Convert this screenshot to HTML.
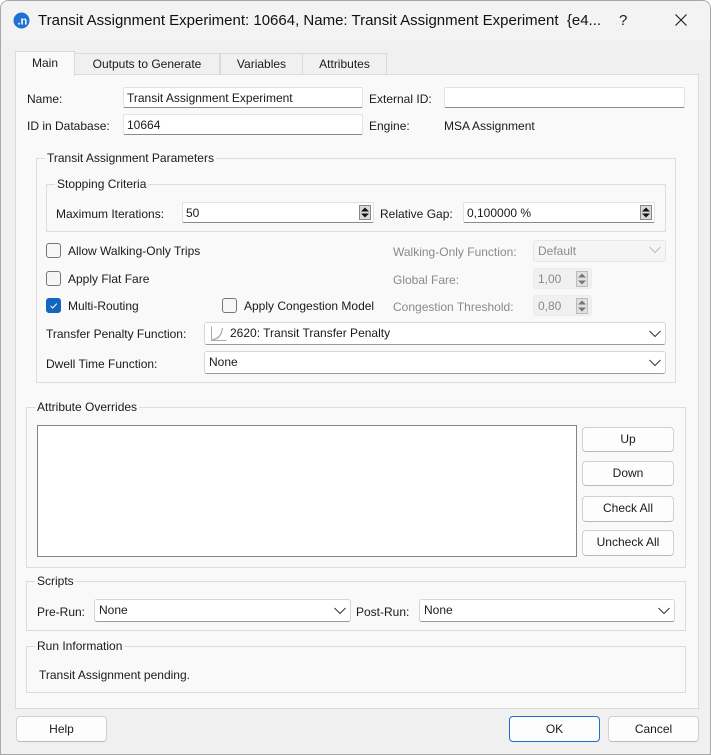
<!DOCTYPE html>
<html><head><meta charset="utf-8"><style>
*{box-sizing:border-box;margin:0;padding:0}
body{width:711px;height:755px;background:#fff;font-family:"Liberation Sans",sans-serif;font-size:12px;color:#1a1a1a;position:relative;overflow:hidden}
.win{position:absolute;left:0;top:0;width:711px;height:755px;background:#f0f0f0;border-radius:8px 8px 0 0;overflow:hidden}
.frame{position:absolute;left:0;top:0;width:711px;height:755px;border:1px solid #a8a8a8;border-radius:8px 8px 0 0}
.a{position:absolute;white-space:nowrap}
.t{position:absolute;white-space:nowrap;line-height:14px}
.in{position:absolute;background:#fff;border:1px solid #e2e2e2;border-bottom:1px solid #8a8a8a;border-radius:2px;padding-left:3px;line-height:20px}
.grp{position:absolute;border:1px solid #dcdcdc}
.gt{position:absolute;background:#f9f9f9;padding:0 2px;line-height:14px;top:-8px}
.cb{position:absolute;width:15px;height:15px;border:1px solid #777;border-radius:3px;background:#f6f6f6}
.btn{position:absolute;background:#fdfdfd;border:1px solid #d0d0d0;border-bottom-color:#b8b8b8;border-radius:4px;text-align:center;line-height:22px}
.cmb{position:absolute;background:#fff;border:1px solid #d6d6d6;border-bottom-color:#9a9a9a;border-radius:3px;line-height:21px;padding-left:4px}
.chev{position:absolute;right:4px;top:5px}
.spin{position:absolute;right:2px;top:2px;width:12px;height:15px;background:#d8d8d8;border:1px solid #888}
.g{color:#8a8a8a}
</style></head><body>
<div class="win">
<div class="a" style="left:0;top:0;width:711px;height:41px;background:#f3f3f3"></div>
<svg class="a" style="left:13px;top:12px" width="17" height="17"><circle cx="8.5" cy="8.5" r="8" fill="#1e73d2"/><text x="4.5" y="12.5" font-family="Liberation Sans" font-size="11" font-weight="bold" fill="#fff">.n</text></svg>
<div class="a" style="left:38px;top:12px;font-size:15px;color:#111">Transit Assignment Experiment: 10664, Name: Transit Assignment Experiment&nbsp; {e4...</div>
<div class="a" style="left:619px;top:12px;font-size:15px">?</div>
<svg class="a" style="left:675px;top:14px" width="12" height="12"><path d="M0.5 0.5L11.5 11.5M11.5 0.5L0.5 11.5" stroke="#222" stroke-width="1.2"/></svg>

<div class="a" style="left:74px;top:53px;width:146px;height:22px;border:1px solid #dadada;background:#f0f0f0;text-align:center;line-height:21px">Outputs to Generate</div>
<div class="a" style="left:220px;top:53px;width:83px;height:22px;border:1px solid #dadada;background:#f0f0f0;text-align:center;line-height:21px">Variables</div>
<div class="a" style="left:302px;top:53px;width:85px;height:22px;border:1px solid #dadada;background:#f0f0f0;text-align:center;line-height:21px">Attributes</div>
<div class="a" style="left:15px;top:74px;width:684px;height:635px;border:1px solid #dadada;background:#f9f9f9"></div>
<div class="a" style="left:15px;top:51px;width:60px;height:25px;border:1px solid #dadada;border-bottom:none;background:#f9f9f9;text-align:center;line-height:23px">Main</div>

<div class="t" style="left:27px;top:92px">Name:</div>
<div class="in" style="left:123px;top:87px;width:240px;height:21px">Transit Assignment Experiment</div>
<div class="t" style="left:369px;top:92px">External ID:</div>
<div class="in" style="left:444px;top:87px;width:241px;height:21px"></div>
<div class="t" style="left:27px;top:119px">ID in Database:</div>
<div class="in" style="left:123px;top:114px;width:240px;height:21px">10664</div>
<div class="t" style="left:369px;top:119px">Engine:</div>
<div class="t" style="left:444px;top:119px">MSA Assignment</div>

<div class="grp" style="left:36px;top:158px;width:640px;height:225px"><div class="gt" style="left:8px">Transit Assignment Parameters</div></div>
<div class="grp" style="left:46px;top:184px;width:620px;height:48px"><div class="gt" style="left:8px">Stopping Criteria</div></div>
<div class="t" style="left:56px;top:207px">Maximum Iterations:</div>
<div class="in" style="left:182px;top:202px;width:192px;height:21px">50<div class="spin"><svg width="10" height="13" style="position:absolute;left:0;top:0"><path d="M1 5.5L5 1.5L9 5.5Z M1 7.5L5 11.5L9 7.5Z" fill="#111"/></svg></div></div>
<div class="t" style="left:380px;top:207px">Relative Gap:</div>
<div class="in" style="left:463px;top:202px;width:192px;height:21px">0,100000 %<div class="spin"><svg width="10" height="13" style="position:absolute;left:0;top:0"><path d="M1 5.5L5 1.5L9 5.5Z M1 7.5L5 11.5L9 7.5Z" fill="#111"/></svg></div></div>

<div class="cb" style="left:46px;top:243px"></div><div class="t" style="left:68px;top:244px">Allow Walking-Only Trips</div>
<div class="cb" style="left:46px;top:271px"></div><div class="t" style="left:68px;top:272px">Apply Flat Fare</div>
<div class="cb" style="left:46px;top:298px;background:#1565c0;border-color:#1565c0"><svg width="13" height="13" style="position:absolute;left:0;top:0"><path d="M3.5 6.8L5.7 9L9.8 4.6" stroke="#fff" stroke-width="1" fill="none"/></svg></div><div class="t" style="left:68px;top:299px">Multi-Routing</div>
<div class="cb" style="left:222px;top:298px"></div><div class="t" style="left:244px;top:299px">Apply Congestion Model</div>

<div class="t g" style="left:393px;top:245px">Walking-Only Function:</div>
<div class="cmb g" style="left:533px;top:240px;width:133px;height:22px;background:#f5f5f5;border-color:#e6e6e6">Default<svg class="chev" width="12" height="8"><path d="M0.5 1L6 6.5L11.5 1" stroke="#bbb" fill="none"/></svg></div>
<div class="t g" style="left:393px;top:273px">Global Fare:</div>
<div class="cmb g" style="left:533px;top:268px;width:59px;height:21px;background:#f0f0f0;border-color:#ececec">1,00<svg class="a" style="left:42px;top:2px" width="12" height="16"><rect x="0.5" y="0.5" width="11" height="15" fill="#e0e0e0" stroke="#bbb"/><path d="M2 6.5L6 2.5L10 6.5Z M2 9.5L6 13.5L10 9.5Z" fill="#777"/></svg></div>
<div class="t g" style="left:393px;top:300px">Congestion Threshold:</div>
<div class="cmb g" style="left:533px;top:295px;width:59px;height:21px;background:#f0f0f0;border-color:#ececec">0,80<svg class="a" style="left:42px;top:2px" width="12" height="16"><rect x="0.5" y="0.5" width="11" height="15" fill="#e0e0e0" stroke="#bbb"/><path d="M2 6.5L6 2.5L10 6.5Z M2 9.5L6 13.5L10 9.5Z" fill="#777"/></svg></div>

<div class="t" style="left:46px;top:327px">Transfer Penalty Function:</div>
<div class="cmb" style="left:204px;top:322px;width:462px;height:23px;padding-left:25px">2620: Transit Transfer Penalty<svg class="a" style="left:5px;top:3px" width="17" height="16"><path d="M1.5 0.5V14.5H16.5" stroke="#aaa" fill="none"/><path d="M2.5 13.5Q11 13 12.5 2" stroke="#999" fill="none"/></svg><svg class="chev" width="12" height="8" style="top:7px"><path d="M0.5 1L6 6.5L11.5 1" stroke="#333" fill="none"/></svg></div>
<div class="t" style="left:46px;top:357px">Dwell Time Function:</div>
<div class="cmb" style="left:204px;top:351px;width:462px;height:23px">None<svg class="chev" width="12" height="8" style="top:7px"><path d="M0.5 1L6 6.5L11.5 1" stroke="#333" fill="none"/></svg></div>

<div class="grp" style="left:26px;top:407px;width:660px;height:161px"><div class="gt" style="left:8px">Attribute Overrides</div></div>
<div class="a" style="left:37px;top:425px;width:540px;height:132px;background:#fff;border:1px solid #848484"></div>
<div class="btn" style="left:582px;top:427px;width:92px;height:25px">Up</div>
<div class="btn" style="left:582px;top:461px;width:92px;height:25px">Down</div>
<div class="btn" style="left:582px;top:496px;width:92px;height:26px">Check All</div>
<div class="btn" style="left:582px;top:530px;width:92px;height:26px">Uncheck All</div>

<div class="grp" style="left:26px;top:581px;width:660px;height:50px"><div class="gt" style="left:8px">Scripts</div></div>
<div class="t" style="left:37px;top:605px">Pre-Run:</div>
<div class="cmb" style="left:94px;top:599px;width:257px;height:23px">None<svg class="chev" width="12" height="8" style="top:7px"><path d="M0.5 1L6 6.5L11.5 1" stroke="#333" fill="none"/></svg></div>
<div class="t" style="left:356px;top:605px">Post-Run:</div>
<div class="cmb" style="left:419px;top:599px;width:256px;height:23px">None<svg class="chev" width="12" height="8" style="top:7px"><path d="M0.5 1L6 6.5L11.5 1" stroke="#333" fill="none"/></svg></div>

<div class="grp" style="left:26px;top:646px;width:660px;height:47px"><div class="gt" style="left:8px">Run Information</div></div>
<div class="t" style="left:39px;top:668px">Transit Assignment pending.</div>

<div class="btn" style="left:16px;top:716px;width:91px;height:26px;line-height:24px">Help</div>
<div class="btn" style="left:509px;top:716px;width:91px;height:26px;line-height:24px;border-color:#1a6fc9">OK</div>
<div class="btn" style="left:608px;top:716px;width:91px;height:26px;line-height:24px">Cancel</div>
<div class="frame"></div>
</div>
</body></html>
